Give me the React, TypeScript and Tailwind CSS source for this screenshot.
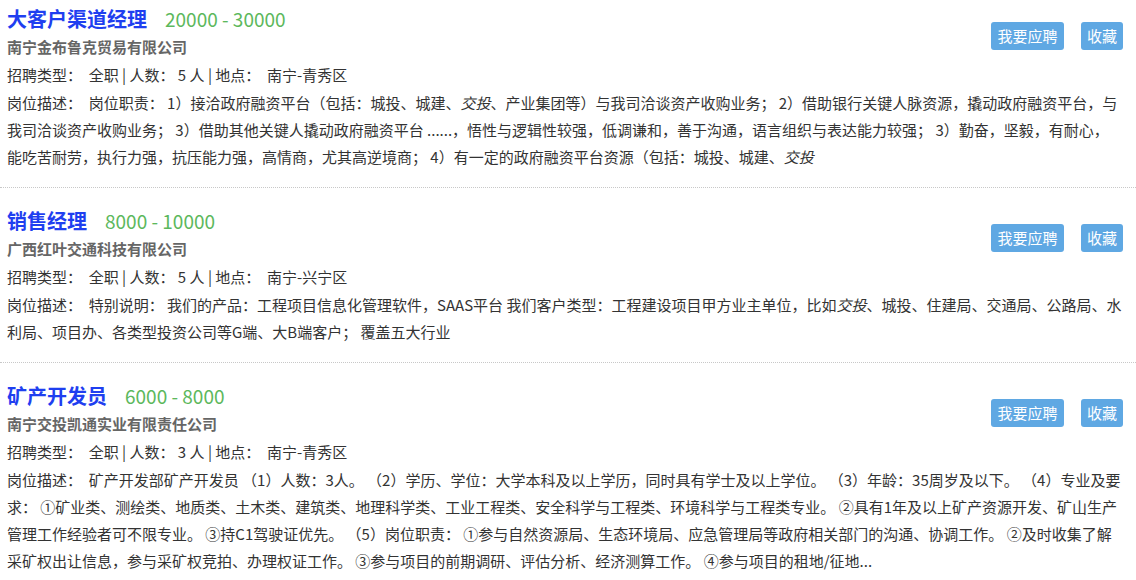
import React from "react";

type Job = {
  title: string;
  salary: string;
  company: string;
  count: string;
  place: string;
  lines: React.ReactNode[];
};

const jobs: Job[] = [
  {
    title: "大客户渠道经理",
    salary: "20000 - 30000",
    company: "南宁金布鲁克贸易有限公司",
    count: "5",
    place: "南宁-青秀区",
    lines: [
      <>
        {"岗位描述：  岗位职责： 1）接洽政府融资平台（包括：城投、城建、"}
        <i>交投</i>
        {"、产业集团等）与我司洽谈资产收购业务； 2）借助银行关键人脉资源，撬动政府融资平台，与"}
      </>,
      <>{"我司洽谈资产收购业务； 3）借助其他关键人撬动政府融资平台 ......，悟性与逻辑性较强，低调谦和，善于沟通，语言组织与表达能力较强； 3）勤奋，坚毅，有耐心，"}</>,
      <>
        {"能吃苦耐劳，执行力强，抗压能力强，高情商，尤其高逆境商； 4）有一定的政府融资平台资源（包括：城投、城建、"}
        <i>交投</i>
      </>,
    ],
  },
  {
    title: "销售经理",
    salary: "8000 - 10000",
    company: "广西红叶交通科技有限公司",
    count: "5",
    place: "南宁-兴宁区",
    lines: [
      <>
        {"岗位描述：  特别说明： 我们的产品：工程项目信息化管理软件，SAAS平台 我们客户类型：工程建设项目甲方业主单位，比如"}
        <i>交投</i>
        {"、城投、住建局、交通局、公路局、水"}
      </>,
      <>{"利局、项目办、各类型投资公司等G端、大B端客户； 覆盖五大行业"}</>,
    ],
  },
  {
    title: "矿产开发员",
    salary: "6000 - 8000",
    company: "南宁交投凯通实业有限责任公司",
    count: "3",
    place: "南宁-青秀区",
    lines: [
      <>{"岗位描述：  矿产开发部矿产开发员 （1）人数：3人。 （2）学历、学位：大学本科及以上学历，同时具有学士及以上学位。 （3）年龄：35周岁及以下。 （4）专业及要"}</>,
      <>{"求： ①矿业类、测绘类、地质类、土木类、建筑类、地理科学类、工业工程类、安全科学与工程类、环境科学与工程类专业。 ②具有1年及以上矿产资源开发、矿山生产"}</>,
      <>{"管理工作经验者可不限专业。 ③持C1驾驶证优先。 （5）岗位职责： ①参与自然资源局、生态环境局、应急管理局等政府相关部门的沟通、协调工作。 ②及时收集了解"}</>,
      <>{"采矿权出让信息，参与采矿权竞拍、办理权证工作。 ③参与项目的前期调研、评估分析、经济测算工作。 ④参与项目的租地/征地..."}</>,
    ],
  },
];

function JobCard({ job, last }: { job: Job; last: boolean }) {
  return (
    <div
      className={
        "px-[7px] pt-[5px] pb-[17px] " +
        (last ? "" : "border-b border-dotted border-[#c8c8c8]")
      }
    >
      <div className="flex justify-between">
        <div className="flex flex-col">
          <div className="flex h-[28px] items-center">
            <span className="text-[20px] font-bold text-[#1f3ff0] leading-[28px]">
              {job.title}
            </span>
            <span className="ml-[18px] text-[19px] text-[#5cb85c] leading-[28px]">
              {job.salary}
            </span>
          </div>
          <div className="h-[28px] leading-[28px] text-[15px] font-bold text-[#666]">
            {job.company}
          </div>
          <div className="h-[28px] leading-[28px] text-[15px] text-[#333] whitespace-pre">
            {"招聘类型：  全职 | 人数： " + job.count + " 人 | 地点：  " + job.place}
          </div>
        </div>
        <div className="mt-[17px] mr-[6px] flex items-start gap-[17px]">
          <button className="h-[28px] w-[73px] rounded-[3px] bg-[#5fa8e3] text-center text-[15px] leading-[28px] text-white">
            我要应聘
          </button>
          <button className="h-[28px] w-[42px] rounded-[3px] bg-[#5fa8e3] text-center text-[15px] leading-[28px] text-white">
            收藏
          </button>
        </div>
      </div>
      <div className="text-[15px] leading-[27px] text-[#333]">
        {job.lines.map((l, i) => (
          <div key={i} className="whitespace-pre">
            {l}
          </div>
        ))}
      </div>
    </div>
  );
}

export default function App() {
  return (
    <div
      className="flex h-[580px] w-[1136px] flex-col gap-[14px] overflow-hidden bg-white"
      style={{ fontFamily: '"Noto Sans CJK SC", "Noto Sans", sans-serif' }}
    >
      {jobs.map((j, i) => (
        <JobCard key={i} job={j} last={i === jobs.length - 1} />
      ))}
    </div>
  );
}
